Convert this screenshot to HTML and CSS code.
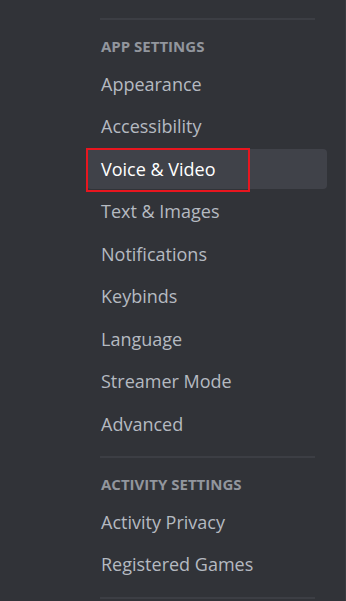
FILE: index.html
```html
<!DOCTYPE html>
<html>
<head>
<meta charset="utf-8">
<link rel="stylesheet" href="styles.css">
</head>
<body>
<nav class="sidebar">
  <div class="divider"></div>
  <div class="header">App Settings</div>
  <div class="item">Appearance</div>
  <div class="item">Accessibility</div>
  <div class="item selected"><span class="highlight"></span>Voice &amp; Video</div>
  <div class="item">Text &amp; Images</div>
  <div class="item">Notifications</div>
  <div class="item">Keybinds</div>
  <div class="item">Language</div>
  <div class="item">Streamer Mode</div>
  <div class="item">Advanced</div>
  <div class="divider spaced"></div>
  <div class="header">Activity Settings</div>
  <div class="item">Activity Privacy</div>
  <div class="item">Registered Games</div>
  <div class="divider spaced"></div>
</nav>
</body>
</html>
```

FILE: styles.css
```css
html, body {
  margin: 0;
  padding: 0;
  background: #313338;
  height: 100%;
  overflow: hidden;
}
body {
  font-family: "Open Sans", "Noto Sans", sans-serif;
  border-right: 1px solid #393b40;
  box-sizing: border-box;
}
.sidebar {
  padding: 18px 0 0 87px;
  width: 240px;
  display: flex;
  flex-direction: column;
}
.divider {
  height: 2px;
  background: #3c3e44;
  margin: 0 12px 0 13px;
}
.divider.spaced {
  margin-top: 10px;
}
.header {
  height: 43.5px;
  box-sizing: border-box;
  padding: 17px 0 0 14px;
  line-height: 18px;
  font-size: 15px;
  font-weight: 700;
  text-transform: uppercase;
  color: #92969d;
}
.item {
  position: relative;
  height: 40px;
  line-height: 40px;
  margin-bottom: 2.5px;
  padding-left: 14px;
  font-size: 18px;
  color: #b5bac1;
  border-radius: 4px;
}
.item.selected {
  background: #404249;
  color: #ffffff;
  font-weight: 500;
}
.highlight {
  position: absolute;
  left: -1px;
  top: -1px;
  width: 160px;
  height: 40px;
  border: 2px solid #e8161f;
}
```
